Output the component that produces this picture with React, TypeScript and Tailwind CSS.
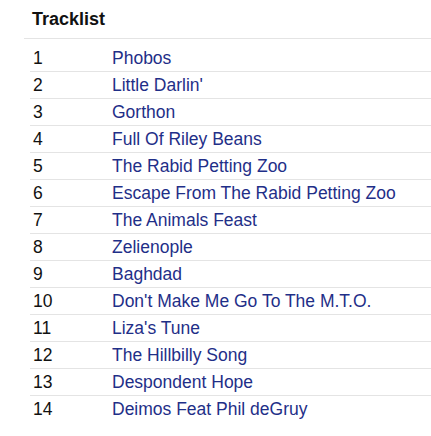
const tracks = [
  "Phobos",
  "Little Darlin'",
  "Gorthon",
  "Full Of Riley Beans",
  "The Rabid Petting Zoo",
  "Escape From The Rabid Petting Zoo",
  "The Animals Feast",
  "Zelienople",
  "Baghdad",
  "Don't Make Me Go To The M.T.O.",
  "Liza's Tune",
  "The Hillbilly Song",
  "Despondent Hope",
  "Deimos Feat Phil deGruy",
]

export default function App() {
  return (
    <div className="min-h-screen bg-white font-['Liberation_Sans',Arial,sans-serif] pt-[8px]">
      {/* Heading */}
      <div className="ml-[24px] border-b border-[#e4e4e4] pl-[8px] pb-[8px]">
        <h2 className="text-[18px] leading-[22px] font-bold text-[#111]">Tracklist</h2>
      </div>

      {/* Track rows */}
      <div className="ml-[30px] mt-[6px]">
        {tracks.map((title, i) => (
          <div
            key={i}
            className={
              i < tracks.length - 1
                ? "flex h-[27px] items-center border-b border-[#e4e4e4] text-[17.5px]"
                : "flex h-[27px] items-center text-[17.5px]"
            }
          >
            <span className="w-[82px] pl-[3px] text-[#111]">{i + 1}</span>
            <a href="#" className="text-[#1f2f88]">
              {title}
            </a>
          </div>
        ))}
      </div>
    </div>
  )
}
